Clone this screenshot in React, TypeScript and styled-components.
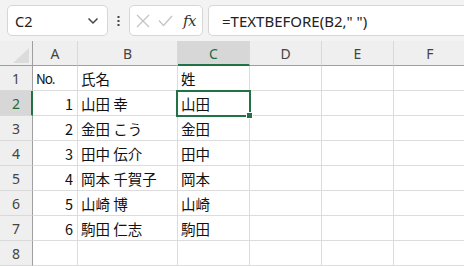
import React from "react";
import styled, { createGlobalStyle } from "styled-components";

const GlobalStyle = createGlobalStyle`
  html, body {
    margin: 0;
    padding: 0;
    background: #ffffff;
    overflow: hidden;
  }
  body {
    font-family: "Noto Sans", "Noto Sans CJK JP", sans-serif;
  }
`;

const GREEN = "#217346";
const COLS = ["A", "B", "C", "D", "E", "F"];
const WIDTHS = [45, 100, 72, 72, 72, 72];

const rows: [string, string, string][] = [
  ["No.", "氏名", "姓"],
  ["1", "山田 幸", "山田"],
  ["2", "金田 こう", "金田"],
  ["3", "田中 伝介", "田中"],
  ["4", "岡本 千賀子", "岡本"],
  ["5", "山崎 博", "山崎"],
  ["6", "駒田 仁志", "駒田"],
  ["", "", ""],
];

const Page = styled.div`
  width: 464px;
  height: 266px;
  display: flex;
  flex-direction: column;
  overflow: hidden;
`;

const Toolbar = styled.div`
  height: 41px;
  background: #f3f3f3;
  display: flex;
  align-items: flex-start;
  padding: 5px 0 0 7px;
  box-sizing: border-box;
`;

const NameBox = styled.div`
  width: 101px;
  height: 31px;
  box-sizing: border-box;
  background: #fff;
  border: 1px solid #d6d6d6;
  border-radius: 5px;
  display: flex;
  align-items: center;
  justify-content: space-between;
  padding: 0 8px 0 7px;
  font-family: "Noto Sans", sans-serif;
  font-size: 14.5px;
  color: #222;
`;

const Dots = styled.div`
  width: 21px;
  display: flex;
  justify-content: center;
  align-items: center;
  height: 31px;
`;

const FxBox = styled.div`
  width: 74px;
  height: 31px;
  box-sizing: border-box;
  background: #fff;
  border: 1px solid #d6d6d6;
  border-radius: 5px;
  display: flex;
  align-items: center;
  padding: 0 4px 0 6px;
  gap: 8px;
  margin-right: 5px;
`;

const Fx = styled.span`
  font-family: "DejaVu Serif", "Liberation Serif", serif;
  font-style: italic;
  font-size: 15px;
  color: #333;
  margin-left: 2px;
  letter-spacing: -0.5px;
`;

const FormulaBox = styled.div`
  flex: 1;
  height: 31px;
  box-sizing: border-box;
  background: #fff;
  border: 1px solid #d6d6d6;
  border-right: none;
  border-radius: 5px 0 0 5px;
  display: flex;
  align-items: center;
  padding-left: 13px;
  font-family: "Noto Sans", sans-serif;
  font-size: 15px;
  color: #222;
  white-space: nowrap;
`;

const Grid = styled.div`
  display: grid;
  grid-template-columns: 33px ${WIDTHS.map((w) => `${w}px`).join(" ")};
  grid-auto-rows: 25px;
  flex: 1;
`;

const Corner = styled.div`
  background: #efefef;
  border-right: 1px solid #9f9f9f;
  border-bottom: 1px solid #9f9f9f;
  position: relative;
  box-sizing: border-box;
`;

const Triangle = styled.div`
  position: absolute;
  right: 3px;
  bottom: 2px;
  width: 0;
  height: 0;
  border-left: 16px solid transparent;
  border-bottom: 15px solid #dcdcdc;
`;

const ColHead = styled.div<{ $active?: boolean; $last?: boolean }>`
  box-sizing: border-box;
  background: ${(p) => (p.$active ? "#d7d7d7" : "#efefef")};
  border-right: ${(p) => (p.$last ? "none" : "1px solid #d9d9d9")};
  border-bottom: ${(p) => (p.$active ? `2px solid ${GREEN}` : "1px solid #9f9f9f")};
  display: flex;
  align-items: center;
  justify-content: center;
  font-family: "Noto Sans", sans-serif;
  font-size: 14px;
  color: ${(p) => (p.$active ? "#1d6b42" : "#444")};
  padding-top: ${(p) => (p.$active ? "1px" : "0")};
`;

const RowHead = styled.div<{ $active?: boolean }>`
  box-sizing: border-box;
  background: ${(p) => (p.$active ? "#d7d7d7" : "#efefef")};
  border-right: ${(p) => (p.$active ? `2px solid ${GREEN}` : "1px solid #9f9f9f")};
  border-bottom: 1px solid #d9d9d9;
  display: flex;
  align-items: center;
  justify-content: center;
  font-family: "Noto Sans", sans-serif;
  font-size: 14px;
  color: ${(p) => (p.$active ? "#1d6b42" : "#444")};
  padding-left: ${(p) => (p.$active ? "1px" : "0")};
`;

const Cell = styled.div<{ $num?: boolean; $last?: boolean }>`
  box-sizing: border-box;
  position: relative;
  background: #fff;
  border-right: ${(p) => (p.$last ? "none" : "1px solid #dcdcdc")};
  border-bottom: 1px solid #dcdcdc;
  display: flex;
  align-items: center;
  justify-content: ${(p) => (p.$num ? "flex-end" : "flex-start")};
  padding: 0 4px 0 3px;
  font-family: "Noto Sans CJK JP", "Noto Sans", sans-serif;
  font-size: 14.5px;
  color: #111;
  white-space: nowrap;
`;

const Abbrev = styled.span`
  font-size: 13.5px;
  letter-spacing: -1px;
`;

const Selection = styled.div`
  position: absolute;
  z-index: 3;
  left: -2px;
  top: -1px;
  right: -2px;
  bottom: -2px;
  border: 2px solid ${GREEN};
  pointer-events: none;
`;

const Handle = styled.div`
  position: absolute;
  right: -4px;
  bottom: -4px;
  width: 5px;
  height: 5px;
  background: ${GREEN};
  border: 1px solid #fff;
`;

function XIcon() {
  return (
    <svg width="14" height="14" viewBox="0 0 14 14">
      <path d="M1 1 L13 13 M13 1 L1 13" stroke="#c4c4c4" strokeWidth="1.3" fill="none" />
    </svg>
  );
}

function CheckIcon() {
  return (
    <svg width="15" height="12" viewBox="0 0 15 12">
      <path d="M1 5.5 L5.5 10.5 L14 1" stroke="#c4c4c4" strokeWidth="1.3" fill="none" />
    </svg>
  );
}

function Chevron() {
  return (
    <svg width="12" height="8" viewBox="0 0 12 8">
      <path d="M1.5 1.5 L6 6 L10.5 1.5" stroke="#444" strokeWidth="1.5" fill="none" />
    </svg>
  );
}

function VDots() {
  return (
    <svg width="3" height="12" viewBox="0 0 3 12">
      <rect x="0.5" y="1" width="2" height="2" fill="#444" />
      <rect x="0.5" y="5" width="2" height="2" fill="#444" />
      <rect x="0.5" y="9" width="2" height="2" fill="#444" />
    </svg>
  );
}

export default function App() {
  return (
    <Page>
      <GlobalStyle />
      <Toolbar>
        <NameBox>
          <span>C2</span>
          <Chevron />
        </NameBox>
        <Dots>
          <VDots />
        </Dots>
        <FxBox>
          <XIcon />
          <CheckIcon />
          <Fx>fx</Fx>
        </FxBox>
        <FormulaBox>=TEXTBEFORE(B2," ")</FormulaBox>
      </Toolbar>
      <Grid>
        <Corner>
          <Triangle />
        </Corner>
        {COLS.map((c, i) => (
          <ColHead key={c} $active={c === "C"} $last={i === COLS.length - 1}>
            {c}
          </ColHead>
        ))}
        {rows.map((r, ri) => (
          <React.Fragment key={ri}>
            <RowHead $active={ri === 1}>{ri + 1}</RowHead>
            <Cell $num={ri > 0}>{ri === 0 ? <Abbrev>{r[0]}</Abbrev> : r[0]}</Cell>
            <Cell>{r[1]}</Cell>
            <Cell>
              {r[2]}
              {ri === 1 && (
                <Selection>
                  <Handle />
                </Selection>
              )}
            </Cell>
            <Cell />
            <Cell />
            <Cell $last />
          </React.Fragment>
        ))}
      </Grid>
    </Page>
  );
}
